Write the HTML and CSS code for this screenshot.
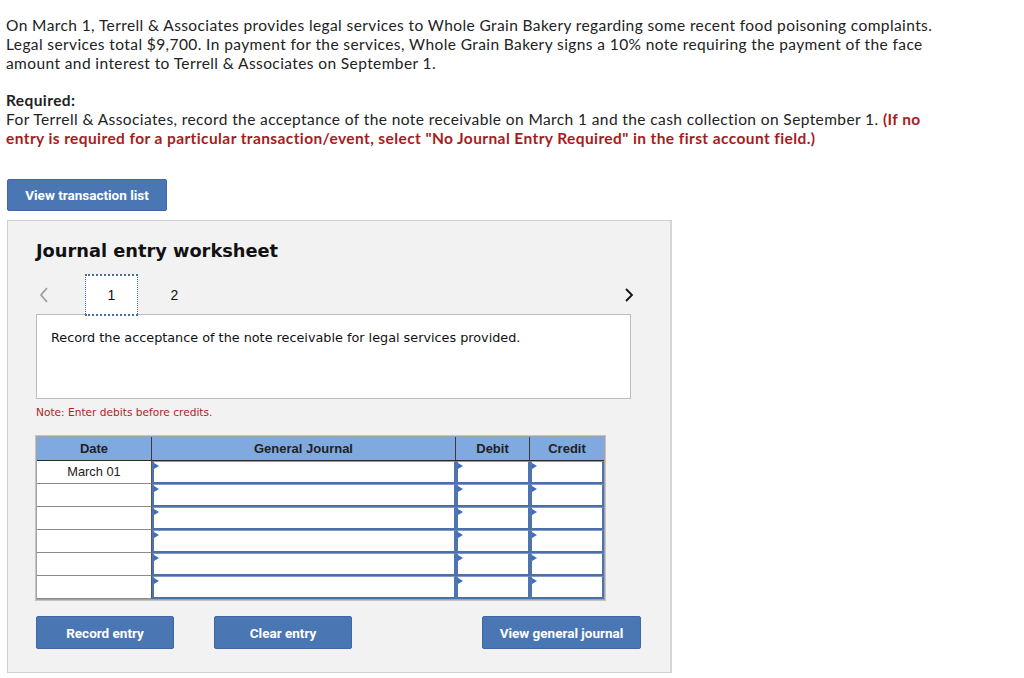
FILE: index.html
```html
<!DOCTYPE html>
<html>
<head>
<meta charset="utf-8">
<link rel="stylesheet" href="styles.css">
</head>
<body>
<div class="page">
  <p class="question">On March 1, Terrell &amp; Associates provides legal services to Whole Grain Bakery regarding some recent food poisoning complaints.<br>Legal services total $9,700. In payment for the services, Whole Grain Bakery signs a 10% note requiring the payment of the face<br>amount and interest to Terrell &amp; Associates on September 1.</p>
  <p class="required"><b>Required:</b><br>For Terrell &amp; Associates, record the acceptance of the note receivable on March 1 and the cash collection on September 1. <b class="red">(If no<br>entry is required for a particular transaction/event, select "No Journal Entry Required" in the first account field.)</b></p>

  <button class="btn btn-list">View transaction list</button>

  <div class="panel">
    <h2 class="title">Journal entry worksheet</h2>
    <div class="nav">
      <span class="arrow arrow-left">
        <svg width="10" height="16" viewBox="0 0 10 16"><path d="M8 1 L2 8 L8 15" fill="none" stroke="#999" stroke-width="1.6"/></svg>
      </span>
      <span class="tab tab-active">1</span>
      <span class="tab">2</span>
      <span class="spacer"></span>
      <span class="arrow arrow-right">
        <svg width="10" height="16" viewBox="0 0 10 16"><path d="M2 2 L8 8 L2 14" fill="none" stroke="#111" stroke-width="1.8"/></svg>
      </span>
    </div>
    <div class="desc">Record the acceptance of the note receivable for legal services provided.</div>
    <p class="note">Note: Enter debits before credits.</p>

    <div class="journal">
      <div class="hd">Date</div>
      <div class="hd">General Journal</div>
      <div class="hd">Debit</div>
      <div class="hd hd-last">Credit</div>

      <div class="date">March 01</div><div class="inp"></div><div class="inp"></div><div class="inp"></div>
      <div class="date"></div><div class="inp"></div><div class="inp"></div><div class="inp"></div>
      <div class="date"></div><div class="inp"></div><div class="inp"></div><div class="inp"></div>
      <div class="date"></div><div class="inp"></div><div class="inp"></div><div class="inp"></div>
      <div class="date"></div><div class="inp"></div><div class="inp"></div><div class="inp"></div>
      <div class="date"></div><div class="inp"></div><div class="inp"></div><div class="inp"></div>
    </div>

    <div class="actions">
      <button class="btn btn-act">Record entry</button>
      <button class="btn btn-act">Clear entry</button>
      <button class="btn btn-act btn-view">View general journal</button>
    </div>
  </div>
</div>
</body>
</html>
```

FILE: styles.css
```css
html, body {
  margin: 0;
  padding: 0;
  background: #fff;
}
.page {
  padding: 16px 0 0 6px;
  font-family: Lato, "Open Sans", sans-serif;
  color: #222;
}
.question, .required {
  margin: 0;
  font-size: 15.5px;
  letter-spacing: 0.4px;
  line-height: 19px;
}
.required {
  margin-top: 18px;
}
.required b {
  font-weight: 700;
}
.red {
  color: #a61c1c;
}
.btn {
  font-family: Roboto, "Liberation Sans", sans-serif;
  font-weight: 700;
  font-size: 13.5px;
  color: #fff;
  background: #4a76b4;
  border: 1px solid #3f68a3;
  border-radius: 2px;
  padding: 0;
  cursor: pointer;
}
.btn-list {
  display: block;
  margin: 31px 0 0 1px;
  width: 160px;
  height: 32px;
}
.panel {
  margin: 9px 0 0 1px;
  width: 634px;
  background: #f2f2f2;
  border: 1px solid #cfcfcf;
  border-right: 2px solid #d4d4d4;
  padding: 18px 0 23px 28px;
}
.title {
  margin: 0;
  font-family: "DejaVu Sans", Verdana, sans-serif;
  font-weight: 700;
  font-size: 17.8px;
  line-height: 24px;
  color: #111;
}
.nav {
  display: flex;
  align-items: center;
  height: 42px;
  margin-top: 11px;
  margin-bottom: -2px;
  width: 600px;
  position: relative;
  z-index: 1;
  font-family: "Liberation Sans", Arial, sans-serif;
  font-size: 14px;
  color: #111;
}
.arrow {
  display: flex;
  align-items: center;
}
.arrow-left {
  width: 49px;
  padding-left: 3px;
  box-sizing: border-box;
}
.tab {
  width: 53px;
  height: 42px;
  display: flex;
  align-items: center;
  justify-content: center;
  box-sizing: border-box;
}
.tab + .tab {
  margin-left: 10px;
}
.tab-active {
  background: #fff;
  border: 1px dotted #3f6fb5;
  border-width: 2px 1px 2px 1px;
}
.spacer {
  flex: 1;
}
.arrow-right {
  padding-right: 2px;
}
.desc {
  width: 595px;
  height: 85px;
  box-sizing: border-box;
  background: #fff;
  border: 1px solid #bdbdbd;
  padding: 15px 0 0 14px;
  font-family: "DejaVu Sans", Verdana, sans-serif;
  font-size: 12.8px;
  line-height: 16px;
  color: #111;
}
.note {
  margin: 7px 0 0;
  font-family: "DejaVu Sans", Verdana, sans-serif;
  font-size: 10.6px;
  line-height: 13px;
  color: #b01f1f;
}
.journal {
  margin-top: 17px;
  display: grid;
  grid-template-columns: 115px 304px 74px 74px;
  grid-template-rows: 24px repeat(6, 23px);
  width: 567px;
  border: 1px solid #a3a3a3;
  box-shadow: 0 0 0 1px #c4c4c4;
  background: #fff;
  font-family: "Liberation Sans", Arial, sans-serif;
}
.hd {
  background: #80a9df;
  font-weight: 700;
  font-size: 13px;
  color: #222;
  display: flex;
  align-items: center;
  justify-content: center;
  border-right: 1px solid #3a3a3a;
  border-bottom: 1px solid #2a2a2a;
}
.hd-last {
  border-right: none;
}
.date {
  font-size: 12.8px;
  color: #222;
  display: flex;
  align-items: center;
  justify-content: center;
  border-bottom: 1px solid #8a8a8a;
  border-right: 1px solid #555;
  padding-bottom: 2px;
  box-sizing: border-box;
}
.inp {
  position: relative;
  background: #fff;
  border: 2px solid #4d73b0;
  border-top: 1px solid #7f9ccc;
  border-left: 2px solid #5274ad;
  border-bottom: 2px solid #4d6fa8;
}
.inp::before {
  content: "";
  position: absolute;
  left: 0;
  top: 1px;
  border-left: 5px solid #3b6fc0;
  border-top: 3px solid transparent;
  border-bottom: 3px solid transparent;
}
.actions {
  display: flex;
  margin-top: 16px;
  width: 605px;
}
.btn-act {
  width: 138px;
  height: 33px;
}
.btn-act + .btn-act {
  margin-left: 40px;
}
.btn-view {
  margin-left: auto !important;
  width: 159px;
}
```
